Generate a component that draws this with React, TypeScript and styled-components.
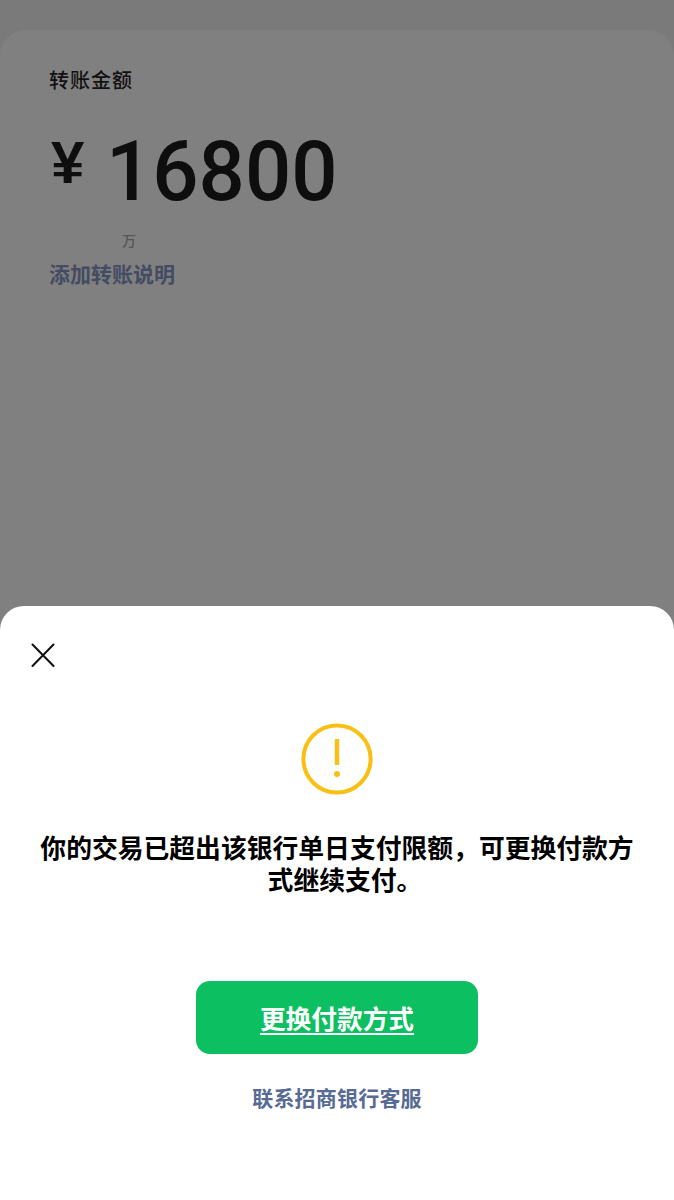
import React from "react";
import styled, { createGlobalStyle } from "styled-components";

const CJK = `"Noto Sans CJK SC", "Noto Sans", sans-serif`;

const Global = createGlobalStyle`
  html, body { margin: 0; padding: 0; background: #7a7a7a; }
  * { box-sizing: border-box; }
`;

const Screen = styled.div`
  width: 674px;
  height: 1200px;
  display: flex;
  flex-direction: column;
  overflow: hidden;
  font-family: ${CJK};
`;

const Backdrop = styled.div`
  height: 630px;
  flex: none;
  padding-top: 30px;
  background: #7a7a7a;
  display: flex;
`;

const AmountCard = styled.section`
  flex: 1;
  background: #808080;
  border-radius: 26px 26px 0 0;
  padding: 36px 49px 0;
`;

const AmountLabel = styled.div`
  font-size: 20px;
  line-height: 28px;
  color: #111;
  font-weight: 500;
  letter-spacing: 1px;
`;

const AmountRow = styled.div`
  display: flex;
  align-items: flex-start;
  margin-top: 34px;
  height: 88px;
`;

const Currency = styled.span`
  font-family: "Liberation Sans", sans-serif;
  font-weight: 700;
  font-size: 60px;
  line-height: 60px;
  color: #0e0e0e;
  width: 57px;
  padding-left: 2px;
  margin-top: 5px;
`;

const AmountValue = styled.span`
  font-family: Roboto, sans-serif;
  font-weight: 500;
  font-size: 84px;
  line-height: 88px;
  color: #0e0e0e;
  transform: scaleX(0.97);
  transform-origin: left center;
`;

const Unit = styled.div`
  font-size: 14px;
  line-height: 18px;
  font-weight: 500;
  color: #555;
  margin: 15px 0 0 73px;
`;

const AddNote = styled.div`
  margin-top: 10px;
  font-size: 21px;
  line-height: 28px;
  font-weight: 700;
  color: #444b63;
`;

const Sheet = styled.section`
  position: relative;
  flex: 1;
  margin-top: -24px;
  background: #fff;
  border-radius: 24px 24px 0 0;
  padding: 37px 30px 0;
  display: flex;
  flex-direction: column;
  align-items: center;
`;

const CloseButton = styled.button`
  align-self: flex-start;
  width: 26px;
  height: 24px;
  padding: 0;
  border: 0;
  background: none;
  display: flex;
  color: #111;
`;

const WarningIcon = styled.svg`
  display: block;
  width: 72px;
  height: 72px;
  margin-top: 56px;
  flex: none;
`;

const Message = styled.p`
  margin: 38px 0 0;
  width: 614px;
  text-align: center;
  font-family: "Liberation Sans", "Noto Sans CJK SC", sans-serif;
  font-size: 25.8px;
  line-height: 32px;
  font-weight: 700;
  color: #000;
`;

const MessageTail = styled.span`
  display: block;
  padding-left: 16px;
`;

const PrimaryButton = styled.button`
  width: 282px;
  height: 73px;
  margin-top: 84px;
  border: 0;
  border-radius: 14px;
  background: #0cbf60;
  color: #fff;
  font-family: ${CJK};
  font-size: 25.7px;
  font-weight: 700;
  text-decoration: underline;
  text-underline-offset: 4px;
`;

const SecondaryLink = styled.a`
  margin-top: 27px;
  font-size: 21px;
  line-height: 32px;
  font-weight: 700;
  letter-spacing: 0.2px;
  color: #576b95;
`;

export default function App() {
  return (
    <Screen>
      <Global />
      <Backdrop>
        <AmountCard>
          <AmountLabel>转账金额</AmountLabel>
          <AmountRow>
            <Currency>¥</Currency>
            <AmountValue>16800</AmountValue>
          </AmountRow>
          <Unit>万</Unit>
          <AddNote>添加转账说明</AddNote>
        </AmountCard>
      </Backdrop>
      <Sheet>
        <CloseButton aria-label="关闭">
          <svg width="26" height="24" viewBox="0 0 26 24" fill="none" stroke="currentColor" strokeWidth="2" strokeLinecap="round">
            <path d="M2.5 1.5 L23.5 23 M23.5 1.5 L2.5 23" />
          </svg>
        </CloseButton>
        <WarningIcon viewBox="0 0 72 72" fill="none">
          <circle cx="36" cy="36" r="33.6" stroke="#f9c013" strokeWidth="4" />
          <rect x="33.8" y="16" width="4.4" height="26" rx="0.5" fill="#f9c013" />
          <circle cx="36" cy="51" r="3" fill="#f9c013" />
        </WarningIcon>
        <Message>
          你的交易已超出该银行单日支付限额，可更换付款方
          <MessageTail>式继续支付。</MessageTail>
        </Message>
        <PrimaryButton>更换付款方式</PrimaryButton>
        <SecondaryLink>联系招商银行客服</SecondaryLink>
      </Sheet>
    </Screen>
  );
}
